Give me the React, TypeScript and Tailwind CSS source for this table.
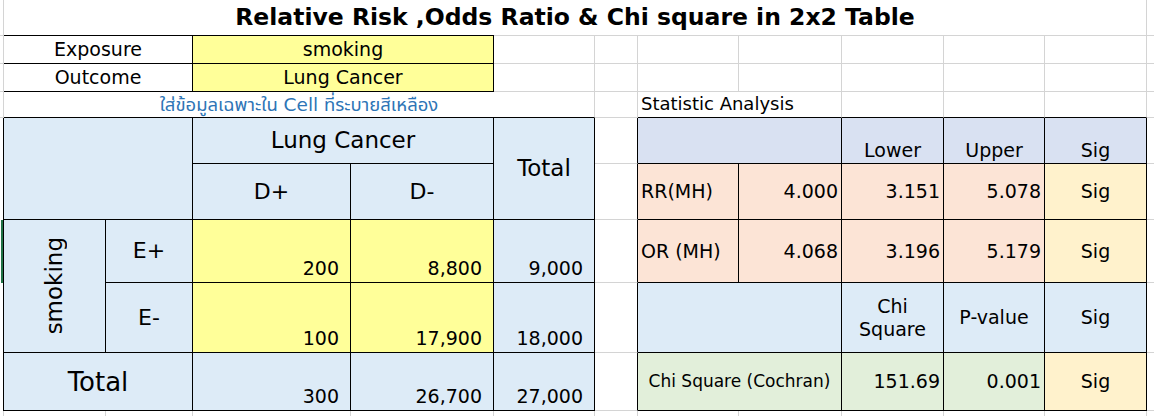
import React from "react";

const F = "font-['DejaVu_Sans','Noto_Sans_Thai','Loma','Tahoma',sans-serif]";
const G = " border-[#d4d4d4] ";
const K = " border-black ";
const BLUE = " bg-[#ddebf7] ";
const LAV = " bg-[#d9e1f2] ";
const PEACH = " bg-[#fce4d6] ";
const LY = " bg-[#fff2cc] ";
const GREEN = " bg-[#e2efda] ";
const YEL = " bg-[#ffff99] ";

type P = { c: string; children?: React.ReactNode };
const Cell = ({ c, children }: P) => (
  <div className={"flex min-w-0 min-h-0 whitespace-nowrap leading-none " + c}>{children}</div>
);

const LNum = ({ c, v }: { c: string; v: string }) => (
  <Cell c={"items-end justify-end pr-[11px] pb-[4px] text-[19px] border-r border-b" + K + c}>{v}</Cell>
);
const RNum = ({ c, v }: { c: string; v: string }) => (
  <Cell c={"items-center justify-end pr-[3px] text-[19px] border-r border-b" + K + c}>{v}</Cell>
);

export default function App() {
  return (
    <div
      className={
        "grid w-[1154px] h-[416px] bg-white text-black overflow-hidden grid-cols-[4px_102px_87px_158px_143px_101px_43px_101px_103px_102px_101px_102px_7px] grid-rows-[35px_1px_28px_28px_26px_46px_56px_63px_70px_58px_5px] " +
        F
      }
    >
      {/* Row 1: title */}
      <Cell c={"col-start-1 row-start-1 border-r" + G} />
      <Cell c={"col-start-2 col-end-13 row-start-1 border-r items-center justify-center font-bold text-[23.5px]" + G}>
        Relative Risk ,Odds Ratio &amp; Chi square in 2x2 Table
      </Cell>

      {/* Row 2: line */}
      <Cell c="col-start-1 col-end-2 row-start-2 bg-[#d4d4d4]" />
      <Cell c="col-start-2 col-end-6 row-start-2 bg-black" />
      <Cell c="col-start-6 col-end-14 row-start-2 bg-[#d4d4d4]" />

      {/* Row 3: Exposure */}
      <Cell c={"col-start-1 row-start-3 border-r border-b" + G} />
      <Cell c={"col-start-2 col-end-4 row-start-3 border-r border-b items-center justify-center text-[19px]" + K}>Exposure</Cell>
      <Cell c={"col-start-4 col-end-6 row-start-3 border-r border-b items-center justify-center text-[19px]" + K + YEL}>smoking</Cell>
      <Cell c={"col-start-6 row-start-3 border-r border-b" + G} />
      <Cell c={"col-start-7 row-start-3 border-r border-b" + G} />
      <Cell c={"col-start-8 row-start-3 border-r border-b" + G} />
      <Cell c={"col-start-9 row-start-3 border-r border-b" + G} />
      <Cell c={"col-start-10 row-start-3 border-r border-b" + G} />
      <Cell c={"col-start-11 row-start-3 border-r border-b" + G} />
      <Cell c={"col-start-12 row-start-3 border-r border-b" + G} />
      <Cell c={"col-start-13 row-start-3 border-b" + G} />

      {/* Row 4: Outcome */}
      <Cell c={"col-start-1 row-start-4 border-r border-b" + G} />
      <Cell c={"col-start-2 col-end-4 row-start-4 border-r border-b items-center justify-center text-[19px]" + K}>Outcome</Cell>
      <Cell c={"col-start-4 col-end-6 row-start-4 border-r border-b items-center justify-center text-[19px]" + K + YEL}>Lung Cancer</Cell>
      <Cell c={"col-start-6 row-start-4 border-r border-b" + G} />
      <Cell c={"col-start-7 row-start-4 border-r border-b" + G} />
      <Cell c={"col-start-8 row-start-4 border-r border-b" + G} />
      <Cell c={"col-start-9 row-start-4 border-r border-b" + G} />
      <Cell c={"col-start-10 row-start-4 border-r border-b" + G} />
      <Cell c={"col-start-11 row-start-4 border-r border-b" + G} />
      <Cell c={"col-start-12 row-start-4 border-r border-b" + G} />
      <Cell c={"col-start-13 row-start-4 border-b" + G} />

      {/* Row 5: note + Statistic Analysis */}
      <Cell c={"col-start-1 row-start-5 border-r border-b" + G} />
      <Cell c={"col-start-2 col-end-7 row-start-5 border-r border-b-black border-b items-end justify-center pb-[3px] text-[18.5px] text-[#2e75b6]" + G}>
        ใส่ข้อมูลเฉพาะใน Cell ที่ระบายสีเหลือง
      </Cell>
      <Cell c={"col-start-7 row-start-5 border-r border-b" + G} />
      <Cell c={"col-start-8 col-end-10 row-start-5 border-r border-b border-b-black items-end pl-[3px] pb-[4px] text-[18px]" + G}>
        Statistic Analysis
      </Cell>
      <Cell c={"col-start-10 row-start-5 border-r border-b border-b-black" + G} />
      <Cell c={"col-start-11 row-start-5 border-r border-b border-b-black" + G} />
      <Cell c={"col-start-12 row-start-5 border-r border-b border-b-black" + G} />
      <Cell c={"col-start-13 row-start-5 border-b" + G} />

      {/* Left edge column for table rows */}
      <Cell c={"col-start-1 row-start-6 row-end-8 border-r" + K} />
      <Cell c={"col-start-1 row-start-8 border-r" + K}>
        <div className="ml-[1px] w-[2px] h-full bg-[#217346]" />
      </Cell>
      <Cell c={"col-start-1 row-start-9 row-end-11 border-r" + K} />
      <Cell c={"col-start-1 row-start-11 border-r" + G} />

      {/* Row 6 */}
      <Cell c={"col-start-2 col-end-4 row-start-6 row-end-8 border-r border-b" + K + BLUE} />
      <Cell c={"col-start-4 col-end-6 row-start-6 border-r border-b items-center justify-center text-[23px]" + K + BLUE}>Lung Cancer</Cell>
      <Cell c={"col-start-6 row-start-6 row-end-8 border-r border-b items-center justify-center text-[23px]" + K + BLUE}>Total</Cell>
      <Cell c={"col-start-7 row-start-6 border-r border-r-black border-b" + G} />
      <Cell c={"col-start-8 col-end-10 row-start-6 border-r border-b" + K + LAV} />
      <Cell c={"col-start-10 row-start-6 border-r border-b items-end justify-center pb-[3px] text-[19px]" + K + LAV}>Lower</Cell>
      <Cell c={"col-start-11 row-start-6 border-r border-b items-end justify-center pb-[3px] text-[19px]" + K + LAV}>Upper</Cell>
      <Cell c={"col-start-12 row-start-6 border-r border-b items-end justify-center pb-[3px] text-[19px]" + K + LAV}>Sig</Cell>
      <Cell c={"col-start-13 row-start-6 border-b" + G} />

      {/* Row 7 */}
      <Cell c={"col-start-4 row-start-7 border-r border-b items-center justify-center text-[22px]" + K + BLUE}>D+</Cell>
      <Cell c={"col-start-5 row-start-7 border-r border-b items-center justify-center text-[22px]" + K + BLUE}>D-</Cell>
      <Cell c={"col-start-7 row-start-7 border-r border-r-black border-b" + G} />
      <Cell c={"col-start-8 row-start-7 border-r border-b items-center pl-[3px] text-[19px]" + K + PEACH}>RR(MH)</Cell>
      <RNum c={"col-start-9 row-start-7" + PEACH} v="4.000" />
      <RNum c={"col-start-10 row-start-7" + PEACH} v="3.151" />
      <RNum c={"col-start-11 row-start-7" + PEACH} v="5.078" />
      <Cell c={"col-start-12 row-start-7 border-r border-b items-center justify-center text-[19px]" + K + LY}>Sig</Cell>
      <Cell c={"col-start-13 row-start-7 border-b" + G} />

      {/* Row 8 */}
      <Cell c={"col-start-2 row-start-8 row-end-10 border-r border-b items-center justify-center" + K + BLUE}>
        <span className="[writing-mode:vertical-rl] rotate-180 text-[23px] leading-none">smoking</span>
      </Cell>
      <Cell c={"col-start-3 row-start-8 border-r border-b items-center justify-center text-[22px]" + K + BLUE}>E+</Cell>
      <LNum c={"col-start-4 row-start-8" + YEL} v="200" />
      <LNum c={"col-start-5 row-start-8" + YEL} v="8,800" />
      <LNum c={"col-start-6 row-start-8" + BLUE} v="9,000" />
      <Cell c={"col-start-7 row-start-8 border-r border-r-black border-b" + G} />
      <Cell c={"col-start-8 row-start-8 border-r border-b items-center pl-[3px] text-[19px]" + K + PEACH}>OR (MH)</Cell>
      <RNum c={"col-start-9 row-start-8" + PEACH} v="4.068" />
      <RNum c={"col-start-10 row-start-8" + PEACH} v="3.196" />
      <RNum c={"col-start-11 row-start-8" + PEACH} v="5.179" />
      <Cell c={"col-start-12 row-start-8 border-r border-b items-center justify-center text-[19px]" + K + LY}>Sig</Cell>
      <Cell c={"col-start-13 row-start-8 border-b" + G} />

      {/* Row 9 */}
      <Cell c={"col-start-3 row-start-9 border-r border-b items-center justify-center text-[22px]" + K + BLUE}>E-</Cell>
      <LNum c={"col-start-4 row-start-9" + YEL} v="100" />
      <LNum c={"col-start-5 row-start-9" + YEL} v="17,900" />
      <LNum c={"col-start-6 row-start-9" + BLUE} v="18,000" />
      <Cell c={"col-start-7 row-start-9 border-r border-r-black border-b" + G} />
      <Cell c={"col-start-8 col-end-10 row-start-9 border-r border-b" + K + BLUE} />
      <Cell c={"col-start-10 row-start-9 border-r border-b flex-col items-center justify-center gap-[4px] text-[19px]" + K + BLUE}>
        <span>Chi</span>
        <span>Square</span>
      </Cell>
      <Cell c={"col-start-11 row-start-9 border-r border-b items-center justify-center text-[19px]" + K + BLUE}>P-value</Cell>
      <Cell c={"col-start-12 row-start-9 border-r border-b items-center justify-center text-[19px]" + K + BLUE}>Sig</Cell>
      <Cell c={"col-start-13 row-start-9 border-b" + G} />

      {/* Row 10 */}
      <Cell c={"col-start-2 col-end-4 row-start-10 border-r border-b items-center justify-center text-[26px]" + K + BLUE}>Total</Cell>
      <LNum c={"col-start-4 row-start-10" + BLUE} v="300" />
      <LNum c={"col-start-5 row-start-10" + BLUE} v="26,700" />
      <LNum c={"col-start-6 row-start-10" + BLUE} v="27,000" />
      <Cell c={"col-start-7 row-start-10 border-r border-r-black border-b" + G} />
      <Cell c={"col-start-8 col-end-10 row-start-10 border-r border-b items-center justify-center text-[17px]" + K + GREEN}>
        Chi Square (Cochran)
      </Cell>
      <RNum c={"col-start-10 row-start-10" + GREEN} v="151.69" />
      <RNum c={"col-start-11 row-start-10" + GREEN} v="0.001" />
      <Cell c={"col-start-12 row-start-10 border-r border-b items-center justify-center text-[19px]" + K + LY}>Sig</Cell>
      <Cell c={"col-start-13 row-start-10 border-b" + G} />

      {/* Row 11: gridlines below */}
      <Cell c={"col-start-2 row-start-11 border-r" + G} />
      <Cell c={"col-start-3 row-start-11 border-r" + G} />
      <Cell c={"col-start-4 row-start-11 border-r" + G} />
      <Cell c={"col-start-5 row-start-11 border-r" + G} />
      <Cell c={"col-start-6 row-start-11 border-r" + G} />
      <Cell c={"col-start-7 row-start-11 border-r" + G} />
      <Cell c={"col-start-8 row-start-11 border-r" + G} />
      <Cell c={"col-start-9 row-start-11 border-r" + G} />
      <Cell c={"col-start-10 row-start-11 border-r" + G} />
      <Cell c={"col-start-11 row-start-11 border-r" + G} />
      <Cell c={"col-start-12 row-start-11 border-r" + G} />
    </div>
  );
}
